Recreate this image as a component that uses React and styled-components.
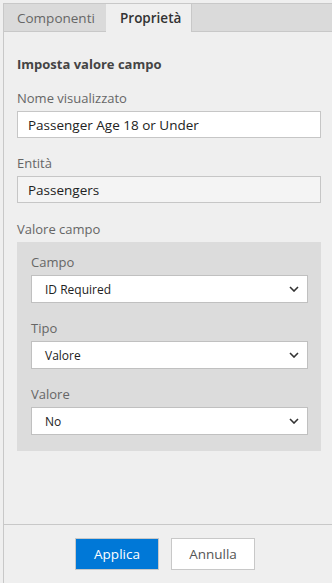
import React from "react";
import styled, { createGlobalStyle } from "styled-components";

const GlobalStyle = createGlobalStyle`
    html, body {
        margin: 0;
        padding: 0;
        background: #efefef;
        font-family: "Open Sans", "Noto Sans", sans-serif;
    }
    #root {
        height: 583px;
        padding: 3px 0 0 3px;
        box-sizing: border-box;
    }
`;

const Panel = styled.div`
    display: flex;
    flex-direction: column;
    height: 100%;
    box-sizing: border-box;
    border-left: 1px solid #c8c8c8;
    border-top: 1px solid #c8c8c8;
    background: #efefef;
`;

const TabBar = styled.div`
    display: flex;
    height: 27px;
    background: #dadada;
    border-bottom: 1px solid #c8c8c8;
`;

const Tab = styled.div`
    display: flex;
    align-items: center;
    padding: 0 ${(props) => (props.active ? "14px" : "13px")};
    width: ${(props) => props.width}px;
    box-sizing: border-box;
    font-size: 13.5px;
    color: ${(props) => (props.active ? "#333" : "#666")};
    font-weight: ${(props) => (props.active ? 600 : 400)};
    background: ${(props) => (props.active ? "#efefef" : "transparent")};
    border-right: ${(props) => (props.active ? "1px solid #c8c8c8" : "none")};
    height: ${(props) => (props.active ? "28px" : "27px")};
`;

const Content = styled.div`
    flex: 1;
    padding: 22px 11px 0 13px;
`;

const Heading = styled.h2`
    margin: 0 0 14px;
    font-size: 13px;
    line-height: 20px;
    font-weight: 700;
    color: #444;
`;

const Field = styled.div`
    margin-bottom: ${(props) => (props.last ? "16px" : "15px")};
`;

const Label = styled.div`
    font-size: 13px;
    line-height: 20px;
    color: #666;
    margin-bottom: 3px;
`;

const TextBox = styled.div`
    height: 27px;
    box-sizing: border-box;
    border: 1px solid #c6c6c6;
    background: ${(props) => (props.readOnly ? "#f4f4f4" : "#fff")};
    padding: 0 10px;
    display: flex;
    align-items: center;
    font-size: 13.5px;
    color: #222;
`;

const GroupBox = styled.div`
    background: #dcdcdc;
    padding: 10px 13px 1px 14px;
`;

const SelectBox = styled.div`
    height: 28px;
    box-sizing: border-box;
    border: 1px solid #c0c0c0;
    background: #fff;
    padding: 0 8px 0 13px;
    display: flex;
    align-items: center;
    justify-content: space-between;
    font-size: 12px;
    color: #222;
`;

const Footer = styled.div`
    border-top: 1px solid #c8c8c8;
    height: 59px;
    box-sizing: border-box;
    padding: 13px 6px 0 0;
    display: flex;
    justify-content: center;
    gap: 12px;
`;

const Button = styled.button`
    width: 84px;
    height: 32px;
    box-sizing: border-box;
    border: 1px solid #c8c8c8;
    background: ${(props) => (props.primary ? "#0078d7" : "#fff")};
    color: ${(props) => (props.primary ? "#fff" : "#555")};
    font-family: inherit;
    font-size: 13.5px;
    padding: 0;
`;

const Chevron = () => (
    <svg width="10" height="6" viewBox="0 0 10 6">
        <path d="M1 1 L5 5 L9 1" fill="none" stroke="#333" strokeWidth="1.6" />
    </svg>
);

const Select = ({ label, value }) => (
    <Field>
        <Label>{label}</Label>
        <SelectBox>
            <span>{value}</span>
            <Chevron />
        </SelectBox>
    </Field>
);

export default function App() {
    return (
        <>
            <GlobalStyle />
            <Panel>
                <TabBar>
                    <Tab width={102}>Componenti</Tab>
                    <Tab active width={86}>Proprietà</Tab>
                </TabBar>
                <Content>
                    <Heading>Imposta valore campo</Heading>
                    <Field>
                        <Label>Nome visualizzato</Label>
                        <TextBox>Passenger Age 18 or Under</TextBox>
                    </Field>
                    <Field last>
                        <Label>Entità</Label>
                        <TextBox readOnly>Passengers</TextBox>
                    </Field>
                    <Label>Valore campo</Label>
                    <GroupBox>
                        <Select label="Campo" value="ID Required" />
                        <Select label="Tipo" value="Valore" />
                        <Select label="Valore" value="No" />
                    </GroupBox>
                </Content>
                <Footer>
                    <Button primary>Applica</Button>
                    <Button>Annulla</Button>
                </Footer>
            </Panel>
        </>
    );
}
